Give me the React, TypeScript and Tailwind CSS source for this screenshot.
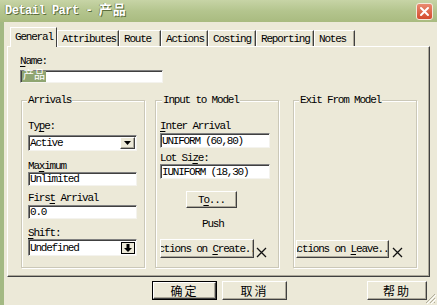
import type { ReactNode } from 'react';

const mono = "font-['Liberation_Mono','Noto_Sans_CJK_SC',monospace]";

function U({ children }: { children: ReactNode }) {
  return <span className="underline underline-offset-2">{children}</span>;
}

function Raised({ className, children }: { className?: string; children: ReactNode }) {
  return (
    <div
      className={`flex items-center justify-center overflow-hidden whitespace-nowrap bg-[#ece9d8] border border-t-white border-l-white border-r-[#404040] border-b-[#404040] shadow-[inset_-1px_-1px_0_#aca899] ${className ?? ''}`}
    >
      <span>{children}</span>
    </div>
  );
}

function Field({ className, children }: { className?: string; children?: ReactNode }) {
  return (
    <div
      className={`flex items-center bg-white pl-[1px] border border-t-[#808080] border-l-[#808080] border-r-[#f4f3ee] border-b-[#f4f3ee] shadow-[inset_1px_1px_0_#404040] overflow-hidden whitespace-nowrap ${className ?? ''}`}
    >
      {children}
    </div>
  );
}

function XMark() {
  return (
    <svg width="11" height="11" viewBox="0 0 11 11" className="shrink-0">
      <path d="M1 1 L10 10 M10 1 L1 10" stroke="#111" strokeWidth="1.3" />
    </svg>
  );
}

function Group({ title, legendClass, children }: { title: string; legendClass: string; children?: ReactNode }) {
  return (
    <fieldset className="w-[124px] h-[174px] flex flex-col border border-[#cbc8b8] shadow-[inset_1px_1px_0_#fff,1px_1px_0_#fff]">
      <legend className={`px-[1px] bg-[#ece9d8] leading-[12px] ${legendClass}`}>{title}</legend>
      {children}
    </fieldset>
  );
}

const tabs = [
  { label: 'Attributes', w: 'w-[62px]' },
  { label: 'Route', w: 'w-[42px]' },
  { label: 'Actions', w: 'w-[47px]' },
  { label: 'Costing', w: 'w-[48px]' },
  { label: 'Reporting', w: 'w-[58px]' },
  { label: 'Notes', w: 'w-[41px]' },
];

export default function App() {
  return (
    <div className={`relative w-[437px] h-[305px] overflow-hidden flex flex-col bg-[#ece9d8] text-[11px] leading-[12px] tracking-[-1.2px] text-black ${mono}`}>
      {/* title bar */}
      <div className="h-[22px] shrink-0 flex items-center justify-between pl-[5px] pr-[4px] bg-[linear-gradient(#c7d4a6,#b4c58e_50%,#a9bb80)]">
        <div className="font-bold text-[12px] tracking-[-0.5px] text-white [text-shadow:1px_1px_0_#5d6e3c,-1px_0_0_#8a9a66]">
          Detail Part - <span className="text-[13px] tracking-[1px]">产品</span>
        </div>
        <div className="w-[17px] h-[17px] rounded-[3px] border border-[#f4e8dc] bg-[linear-gradient(#e98a6f,#d44b2e)] flex items-center justify-center">
          <svg width="11" height="11" viewBox="0 0 11 11">
            <path d="M2 2 L9 9 M9 2 L2 9" stroke="#fff" strokeWidth="2" strokeLinecap="round" />
          </svg>
        </div>
      </div>

      {/* body */}
      <div className="flex-1 flex flex-col border-l-[4px] border-[#a3b983] pl-[3px]">
        {/* tabs */}
        <div className="mt-[5px] h-[19px] flex items-end pl-[3px] relative z-10">
          <div className="w-[47px] h-[20px] -mb-px bg-[#ece9d8] border border-b-0 border-t-white border-l-white border-r-[#404040] pl-[4px] pt-[3px]">
            General
          </div>
          {tabs.map((t) => (
            <div
              key={t.label}
              className={`${t.w} h-[16px] border border-b-0 border-t-white border-l-white border-r-[#404040] shadow-[inset_-1px_0_0_#aca899] pl-[4px] pt-[2px]`}
            >
              {t.label}
            </div>
          ))}
        </div>

        {/* tab panel */}
        <div className="w-[423px] h-[231px] flex flex-col border border-t-white border-l-white border-r-[#404040] border-b-[#404040] shadow-[inset_-1px_-1px_0_#aca899] pl-[12px] pt-[8px]">
          <div>
            <U>N</U>ame:
          </div>
          <div className="mt-[3px] w-[143px] h-[13px] flex items-center bg-white border border-t-[#808080] border-l-[#808080] border-r-[#f4f3ee] border-b-[#f4f3ee] shadow-[inset_1px_1px_0_#404040]">
            <span className="ml-[1px] px-[1px] h-[11px] bg-[#8fa571] text-white text-[11px] tracking-[0px] leading-[11px]">产品</span>
          </div>

          <div className="mt-[11px] ml-[1px] flex">
            <Group title="Arrivals" legendClass="ml-[5px]">
              <div className="flex-1 flex flex-col pl-[6px] pt-[14px]">
                <div>
                  Ty<U>p</U>e:
                </div>
                <Field className="mt-[3px] w-[109px] h-[16px] justify-between">
                  <span>Active</span>
                  <div className="w-[15px] h-[12px] mr-[1px] flex items-center justify-center bg-[#ece9d8] border border-t-white border-l-white border-r-[#404040] border-b-[#404040] shadow-[inset_-1px_-1px_0_#aca899]">
                    <svg width="7" height="4" viewBox="0 0 7 4">
                      <path d="M0 0 H7 L3.5 4 Z" fill="#000" />
                    </svg>
                  </div>
                </Field>
                <div className="mt-[9px]">
                  Ma<U>x</U>imum
                </div>
                <Field className="w-[109px] h-[14px]">Unlimited</Field>
                <div className="mt-[6px]">
                  Firs<U>t</U> Arrival
                </div>
                <Field className="mt-[1px] w-[109px] h-[14px]">0.0</Field>
                <div className="mt-[8px]">
                  <U>S</U>hift:
                </div>
                <Field className="w-[109px] h-[17px] justify-between">
                  <span>Undefined</span>
                  <div className="w-[14px] h-[12px] mr-[1px] border border-black bg-[#ece9d8] flex items-center justify-center">
                    <svg width="8" height="8" viewBox="0 0 8 8">
                      <path d="M2.5 0 H5.5 V4 H8 L4 8 L0 4 H2.5 Z" fill="#000" />
                    </svg>
                  </div>
                </Field>
              </div>
            </Group>

            <div className="ml-[10px]">
              <Group title="Input to Model" legendClass="ml-[6px]">
                <div className="flex-1 flex flex-col pl-[4px] pt-[14px] pb-[9px]">
                  <div>
                    <U>I</U>nter Arrival
                  </div>
                  <Field className="mt-[1px] w-[110px] h-[15px]">UNIFORM (60,80)</Field>
                  <div className="mt-[4px]">
                    Lot Si<U>z</U>e:
                  </div>
                  <Field className="w-[110px] h-[15px]">IUNIFORM (18,30)</Field>
                  <Raised className="mt-[12px] ml-[26px] w-[51px] h-[17px]">
                    T<U>o</U>...
                  </Raised>
                  <div className="mt-[10px] ml-[42px]">Push</div>
                  <div className="mt-auto flex items-end gap-[2px]">
                    <Raised className="w-[94px] h-[19px]">
                      Actions on <U>C</U>reate...
                    </Raised>
                    <XMark />
                  </div>
                </div>
              </Group>
            </div>

            <div className="ml-[14px]">
              <Group title="Exit From Model" legendClass="ml-[5px]">
                <div className="flex-1 flex flex-col pl-[2px] pb-[9px]">
                  <div className="mt-auto flex items-end gap-[3px]">
                    <Raised className="w-[93px] h-[18px]">
                      Actions on <U>L</U>eave...
                    </Raised>
                    <XMark />
                  </div>
                </div>
              </Group>
            </div>
          </div>
        </div>

        {/* dialog buttons */}
        <div className="mt-[4px] flex pl-[145px] font-['Noto_Sans_CJK_SC',sans-serif] text-[12px] tracking-[2px]">
          <div className="border border-black">
            <Raised className="w-[63px] h-[17px]">确定</Raised>
          </div>
          <Raised className="ml-[5px] w-[65px] h-[19px]">取消</Raised>
          <Raised className="ml-[80px] w-[60px] h-[19px]">帮助</Raised>
        </div>
      </div>

      {/* size grip */}
      <svg width="12" height="12" viewBox="0 0 12 12" className="absolute right-[1px] bottom-[1px]">
        <path d="M11 2 L2 11 M11 6 L6 11 M11 10 L10 11" stroke="#b0ad9c" strokeWidth="1" />
        <path d="M12 3 L3 12 M12 7 L7 12" stroke="#fff" strokeWidth="1" />
      </svg>
    </div>
  );
}
